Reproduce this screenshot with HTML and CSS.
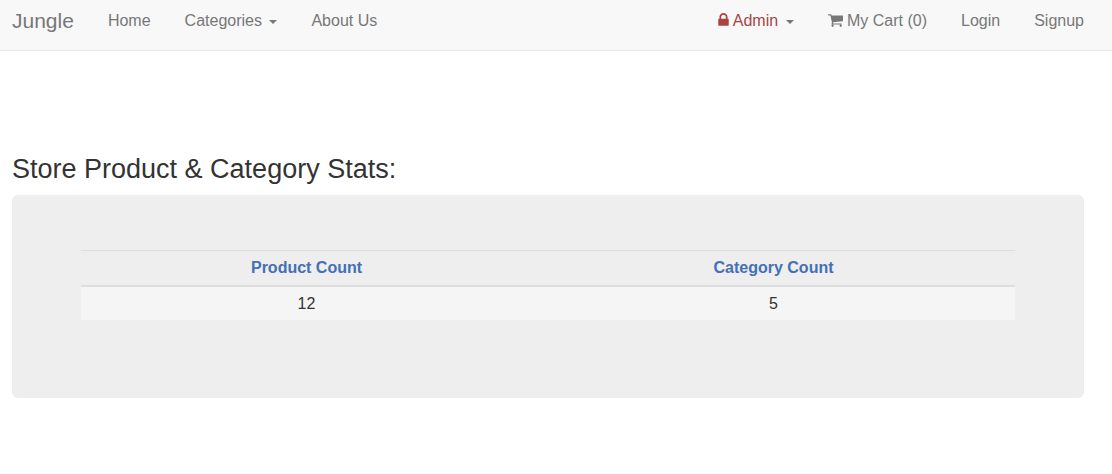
FILE: index.html
```html
<!DOCTYPE html>
<html lang="en">
<head>
<meta charset="utf-8">
<title>Jungle</title>
<link rel="stylesheet" href="styles.css">
</head>
<body>
<nav class="navbar">
  <a class="brand" href="#">Jungle</a>
  <ul class="nav">
    <li><a href="#">Home</a></li>
    <li><a href="#">Categories <span class="caret"></span></a></li>
    <li><a href="#">About Us</a></li>
  </ul>
  <ul class="nav nav-right">
    <li><a href="#"><span class="admin"><svg class="icon-lock" viewBox="0 0 1152 1536" aria-hidden="true"><path d="M320 640h512V448q0-106-75-181t-181-75-181 75-75 181v192zm832 96v576q0 40-28 68t-68 28H96q-40 0-68-28t-28-68V736q0-40 28-68t68-28h32V448q0-184 132-316T576 0t316 132 132 316v192h32q40 0 68 28t28 68z"/></svg> Admin</span> <span class="caret"></span></a></li>
    <li><a href="#"><svg class="icon-cart" viewBox="0 0 1664 1536" aria-hidden="true"><path d="M640 1408q0 52-38 90t-90 38-90-38-38-90 38-90 90-38 90 38 38 90zm896 0q0 52-38 90t-90 38-90-38-38-90 38-90 90-38 90 38 38 90zm128-1088v512q0 24-16.500 42.500t-40.500 21.500l-1044 122q13 60 13 70 0 16-24 64h920q26 0 45 19t19 45-19 45-45 19H448q-26 0-45-19t-19-45q0-11 8-31.500t16-36 21.500-40 15.500-29.500L268 256H64q-26 0-45-19T0 192t19-45 45-19h256q16 0 28.500 6.500T368 150t13 24.500 8 26 5.500 29.500 4.500 26h1201q26 0 45 19t19 45z"/></svg> My Cart (0)</a></li>
    <li><a href="#">Login</a></li>
    <li><a href="#">Signup</a></li>
  </ul>
</nav>
<main class="content">
  <h1 class="title">Store Product &amp; Category Stats:</h1>
  <section class="jumbotron">
    <table class="stats">
      <thead><tr><th scope="col">Product Count</th><th scope="col">Category Count</th></tr></thead>
      <tbody><tr><td>12</td><td>5</td></tr></tbody>
    </table>
  </section>
</main>
</body>
</html>
```
FILE: styles.css
```css
* { box-sizing: border-box; }
body {
  margin: 0;
  background: #fff;
  color: #333;
  font: 16px/20px "Liberation Sans", Arial, sans-serif;
}
.navbar {
  display: flex;
  min-height: 51px;
  padding-right: 11px;
  background: #f8f8f8;
  border-bottom: 1px solid #e7e7e7;
}
.brand, .nav a {
  display: block;
  padding: 11px 17px 19px;
  color: #777;
  text-decoration: none;
  white-space: nowrap;
}
.brand {
  padding-left: 12px;
  font-size: 21px;
}
.nav {
  display: flex;
  margin: 0;
  padding: 0;
  list-style: none;
}
.nav-right { margin-left: auto; }
.caret {
  display: inline-block;
  margin-left: 3px;
  vertical-align: middle;
  border-top: 4px solid;
  border-right: 4px solid transparent;
  border-left: 4px solid transparent;
}
.admin { color: #a94442; }
.icon-lock, .icon-cart {
  height: 14px;
  fill: currentColor;
  vertical-align: -1px;
}
.icon-lock { width: 11px; }
.icon-cart { width: 15px; }
.content { padding: 100px 28px 60px 12px; }
.title {
  margin: 0;
  font-size: 27px;
  font-weight: 400;
  line-height: 36px;
}
.jumbotron {
  margin-top: 8px;
  padding: 55px 69px 78px;
  background: #eee;
  border-radius: 6px;
}
.stats {
  width: 100%;
  table-layout: fixed;
  border-collapse: separate;
  border-spacing: 0;
  text-align: center;
}
.stats th, .stats td { padding: 7px 24px 7px 8px; }
.stats th {
  color: #4470b5;
  border-top: 1px solid #ddd;
  border-bottom: 2px solid #ddd;
}
.stats td {
  padding-bottom: 6px;
  background: #f5f5f5;
}
```
